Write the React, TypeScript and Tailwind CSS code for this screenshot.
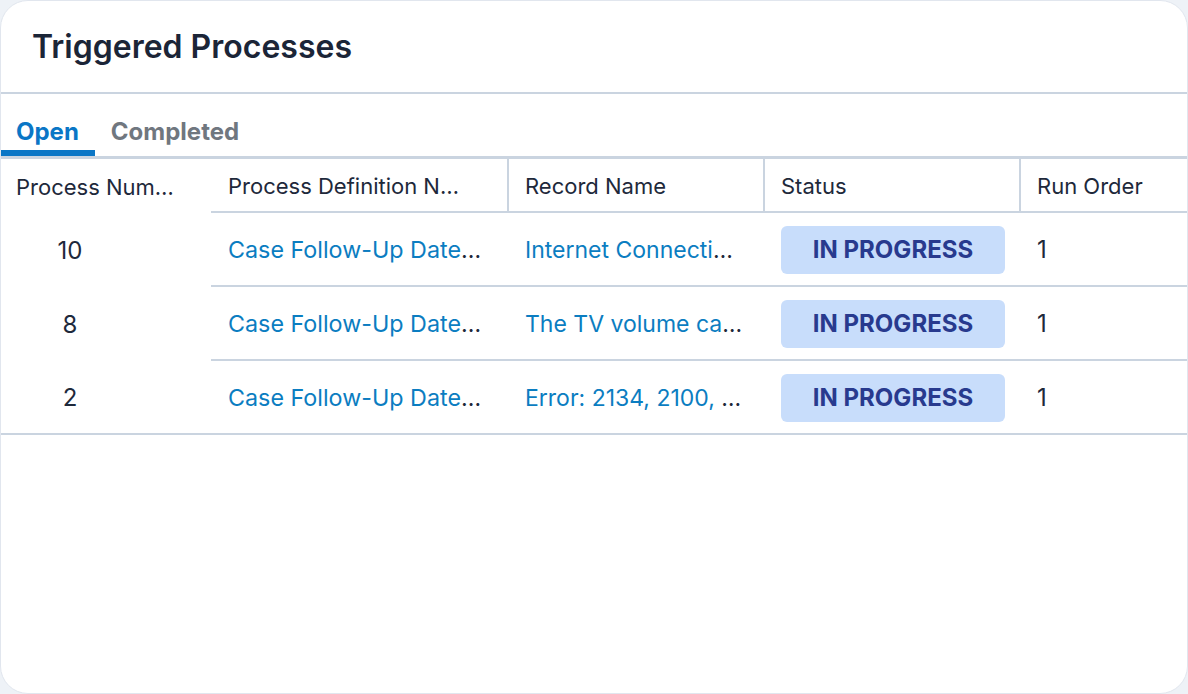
const rows = [
  { num: '10', def: 'Case Follow-Up Date Reminder', record: 'Internet Connection Issue' },
  { num: '8', def: 'Case Follow-Up Date Reminder', record: 'The TV volume cannot be adjusted' },
  { num: '2', def: 'Case Follow-Up Date Reminder', record: 'Error: 2134, 2100, 2101 on startup' },
]

function LinkCell({ text, className }: { text: string; className: string }) {
  return (
    <div className={`${className} truncate text-[#1e293b]`}>
      <a href="#" className="text-[#0b7dc1]">
        {text}
      </a>
    </div>
  )
}

export default function App() {
  return (
    <div className="w-full h-[694px] bg-[#eef2f7] font-['Inter',sans-serif]">
      <div className="h-full bg-white rounded-[28px] border border-[#e1e6ee] overflow-hidden flex flex-col">
        <div className="h-[93px] shrink-0 flex items-center px-[31px] border-b-2 border-[#cad4e0]">
          <h1 className="text-[32px] font-semibold leading-none text-[#1b2537] tracking-[0px]">
            Triggered Processes
          </h1>
        </div>

        <div className="flex shrink-0 border-b-[3px] border-[#cad4e0] -ml-px">
          <button className="px-4 pt-[22px] pb-[2px] text-[24px] leading-8 font-bold text-[#0a76c6] border-b-[6px] border-[#0a76c6] h-[62px]">
            Open
          </button>
          <button className="px-4 pt-[22px] pb-[2px] text-[24px] leading-8 font-bold text-[#70777f] border-b-[6px] border-transparent h-[62px]">
            Completed
          </button>
        </div>

        <div className="border-b-2 border-[#cad4e0] -ml-px text-[#1e293b]">
          <div className="flex text-[22px]">
            <div className="w-[211px] shrink-0 h-[54px] flex items-center pl-4 pt-0.5">
              <span className="truncate max-w-[166px]">Process Number</span>
            </div>
            <div className="flex-1 flex border-b-2 border-[#cad4e0] h-[54px]">
              <div className="w-[296px] shrink-0 flex items-center pl-[17px] pt-0.5 min-w-0">
                <span className="truncate max-w-[242px]">Process Definition Name</span>
              </div>
              <div className="w-[256px] shrink-0 flex items-center border-l-2 border-[#cad4e0] pl-4 pt-0.5">
                Record Name
              </div>
              <div className="w-[256px] shrink-0 flex items-center border-l-2 border-[#cad4e0] pl-4 pt-0.5">
                Status
              </div>
              <div className="flex-1 flex items-center border-l-2 border-[#cad4e0] pl-4 pt-0.5">
                Run Order
              </div>
            </div>
          </div>

          {rows.map((r, i) => (
            <div key={i} className="flex text-[24px]">
              <div className="w-[211px] shrink-0 flex items-center pl-4 pt-0.5">
                <span className="w-[108px] text-center">{r.num}</span>
              </div>
              <div
                className={`flex-1 flex items-center pt-0.5 ${
                  i < rows.length - 1 ? 'h-[74px] border-b-2 border-[#cad4e0]' : 'h-[72px]'
                }`}
              >
                <LinkCell text={r.def} className="w-[296px] shrink-0 pl-[17px] pr-5 text-[23.3px]" />
                <LinkCell text={r.record} className="w-[256px] shrink-0 border-l-2 border-transparent pl-4 pr-5 text-[23px]" />
                <div className="w-[256px] shrink-0 border-l-2 border-transparent pl-4">
                  <span className="w-[224px] h-12 rounded-md bg-[#c8ddfb] flex items-center justify-center text-[24px] font-bold text-[#283a8e]">
                    IN PROGRESS
                  </span>
                </div>
                <div className="flex-1 border-l-2 border-transparent pl-4">1</div>
              </div>
            </div>
          ))}
        </div>
      </div>
    </div>
  )
}
